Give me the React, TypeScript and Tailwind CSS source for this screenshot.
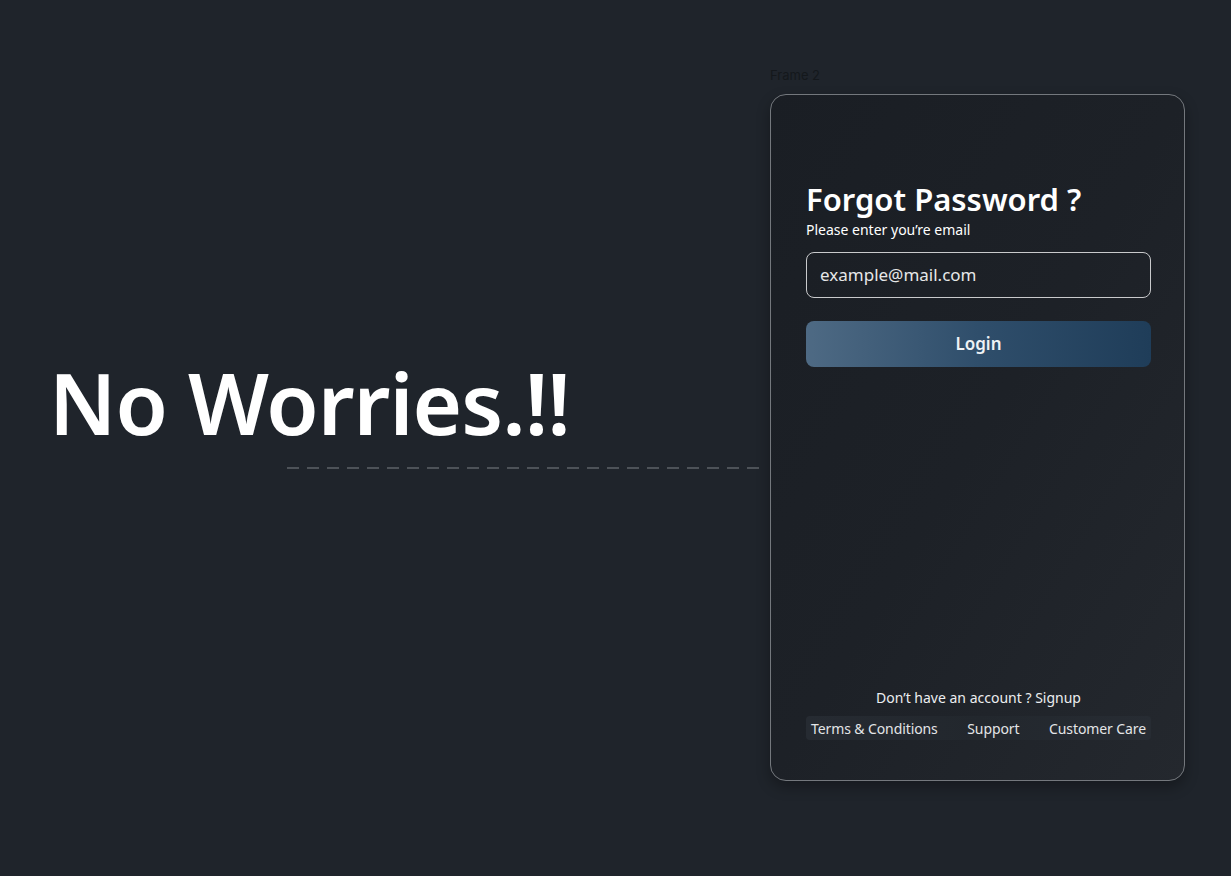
export default function App() {
  return (
    <div className="flex w-[1231px] h-[876px] bg-[#1f242b] overflow-hidden font-['Noto_Sans',sans-serif]">
      {/* left side */}
      <div className="w-[770px] shrink-0 pt-[360px] pl-[49px]">
        <h1 className="text-[85px] leading-none font-semibold text-white tracking-[-1px]">No Worries.!!</h1>
        <svg className="block mt-[22px] ml-[238px]" width="476" height="2">
          <line x1="0" y1="1" x2="476" y2="1" stroke="#4d5258" strokeWidth="2" strokeDasharray="12 8" />
        </svg>
      </div>

      {/* right side */}
      <div className="pt-[67px]">
        <div className="h-[17px] mb-[10px] text-[13px] leading-[17px] text-[#14181c] font-['Inter',sans-serif]">Frame 2</div>
        <div className="w-[415px] h-[687px] rounded-[16px] border border-[#74787d] bg-gradient-to-br from-[#1a1e24] via-[#1d2127] to-[#24282e] shadow-[0_6px_14px_rgba(0,0,0,0.3)] flex flex-col pl-[35px] pr-[33px] pt-[89px] pb-[40px]">
          <h2 className="text-[31px] leading-none font-semibold text-white">Forgot Password ?</h2>
          <p className="mt-[8px] text-[14px] leading-none text-white">Please enter you’re email</p>
          <div className="mt-[15px] h-[46px] rounded-[8px] border border-[#c9cacc] flex items-center pl-[13px] text-[17px] text-[#e6e7e8]">
            example@mail.com
          </div>
          <button className="mt-[23px] h-[46px] rounded-[8px] bg-gradient-to-r from-[#4e6a84] via-[#2f4e6b] to-[#1f3d59] text-[17px] font-semibold text-[#eef2f5]">
            Login
          </button>

          <div className="mt-auto">
            <p className="text-center text-[14px] leading-[20px] text-[#eceef0]">Don’t have an account ? Signup</p>
            <div className="mt-[8px] h-[24px] rounded-[4px] bg-gradient-to-r from-[#262b32] via-[#22272d] to-[#272c33] flex items-center justify-between px-[5px] text-[14px] tracking-[-0.1px] text-[#e3e5e7]">
              <span>Terms &amp; Conditions</span>
              <span>Support</span>
              <span>Customer Care</span>
            </div>
          </div>
        </div>
      </div>
    </div>
  );
}
